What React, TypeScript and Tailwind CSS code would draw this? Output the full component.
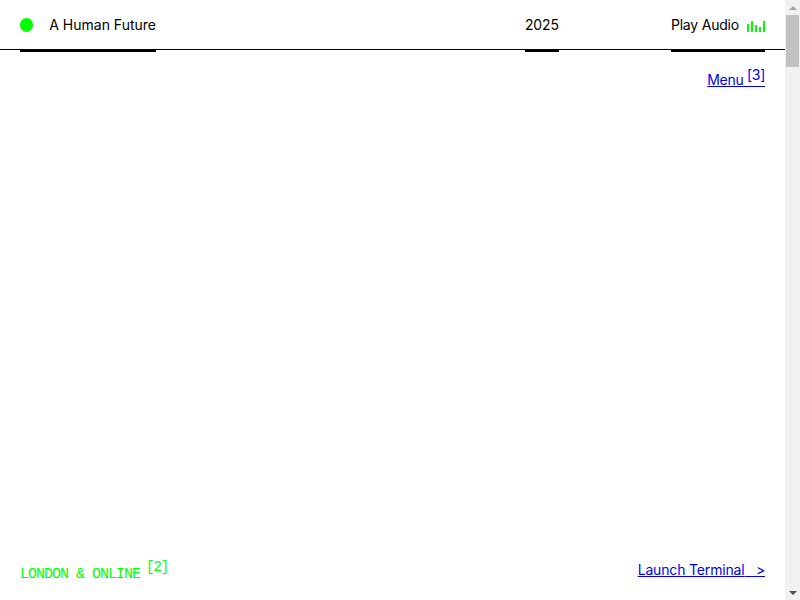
function AudioBars() {
  return (
    <svg width="18" height="11" viewBox="0 0 18 11" className="block">
      <rect x="0" y="3" width="2" height="8" fill="#00ff00" />
      <rect x="4" y="0" width="2" height="11" fill="#00ff00" />
      <rect x="8" y="4" width="2" height="7" fill="#00ff00" />
      <rect x="12" y="6" width="2" height="5" fill="#00ff00" />
      <rect x="16" y="0" width="2" height="11" fill="#00ff00" />
    </svg>
  )
}

function NavItem({ children, className = "" }: { children: React.ReactNode; className?: string }) {
  return (
    <div className={`relative flex h-[50px] items-center whitespace-nowrap ${className}`}>
      {children}
      <span className="absolute -bottom-[2px] left-0 right-0 h-[3px] bg-black" />
    </div>
  )
}

function Scrollbar() {
  return (
    <div className="flex h-[600px] w-[15px] shrink-0 flex-col bg-[#f1f1f1]">
      <div className="flex h-[15px] items-center justify-center">
        <span className="h-0 w-0 border-x-[4px] border-b-[4px] border-x-transparent border-b-[#a3a3a3]" />
      </div>
      <div className="mx-[1px] h-[52px] bg-[#c1c1c1]" />
      <div className="mt-auto flex h-[15px] items-center justify-center">
        <span className="h-0 w-0 border-x-[4px] border-t-[4px] border-x-transparent border-t-[#505050]" />
      </div>
    </div>
  )
}

export default function App() {
  return (
    <div className="flex h-[600px] overflow-hidden bg-white font-['Inter',sans-serif] text-[14px] text-black">
      <div className="flex min-w-0 flex-1 flex-col">
        {/* Header */}
        <div className="flex h-[50px] items-center border-b border-black px-5">
          <NavItem className="w-[136px]">
            <span className="h-3.5 w-3.5 rounded-full bg-[#00ff00]" />
            <span className="ml-4">A Human Future</span>
          </NavItem>
          <NavItem className="ml-auto mr-[112px] tracking-[-0.1px]">2025</NavItem>
          <NavItem className="tracking-[-0.2px]">
            <span>Play Audio</span>
            <span className="ml-2 mt-[3px]">
              <AudioBars />
            </span>
          </NavItem>
        </div>

        <div className="flex justify-end px-5 pt-[19px]">
          <a href="#menu" className="tracking-[-0.3px] text-[#0000ee] underline underline-offset-[1px]">
            Menu <sup className="top-[-5px] text-[14px]">[3]</sup>
          </a>
        </div>

        {/* Footer */}
        <div className="mt-auto flex items-end justify-between px-5">
          <span className="pb-[14px] font-['Liberation_Mono',monospace] text-[15px] tracking-[-1px] text-[#00ff00]">
            LONDON &amp; ONLINE <sup className="-ml-[2px] text-[14px]">[2]</sup>
          </span>
          <a href="#terminal" className="mb-5 whitespace-pre tracking-[-0.16px] text-[#0000ee] underline underline-offset-[1px]">
            Launch Terminal{"   "}&gt;
          </a>
        </div>
      </div>
      <Scrollbar />
    </div>
  )
}
